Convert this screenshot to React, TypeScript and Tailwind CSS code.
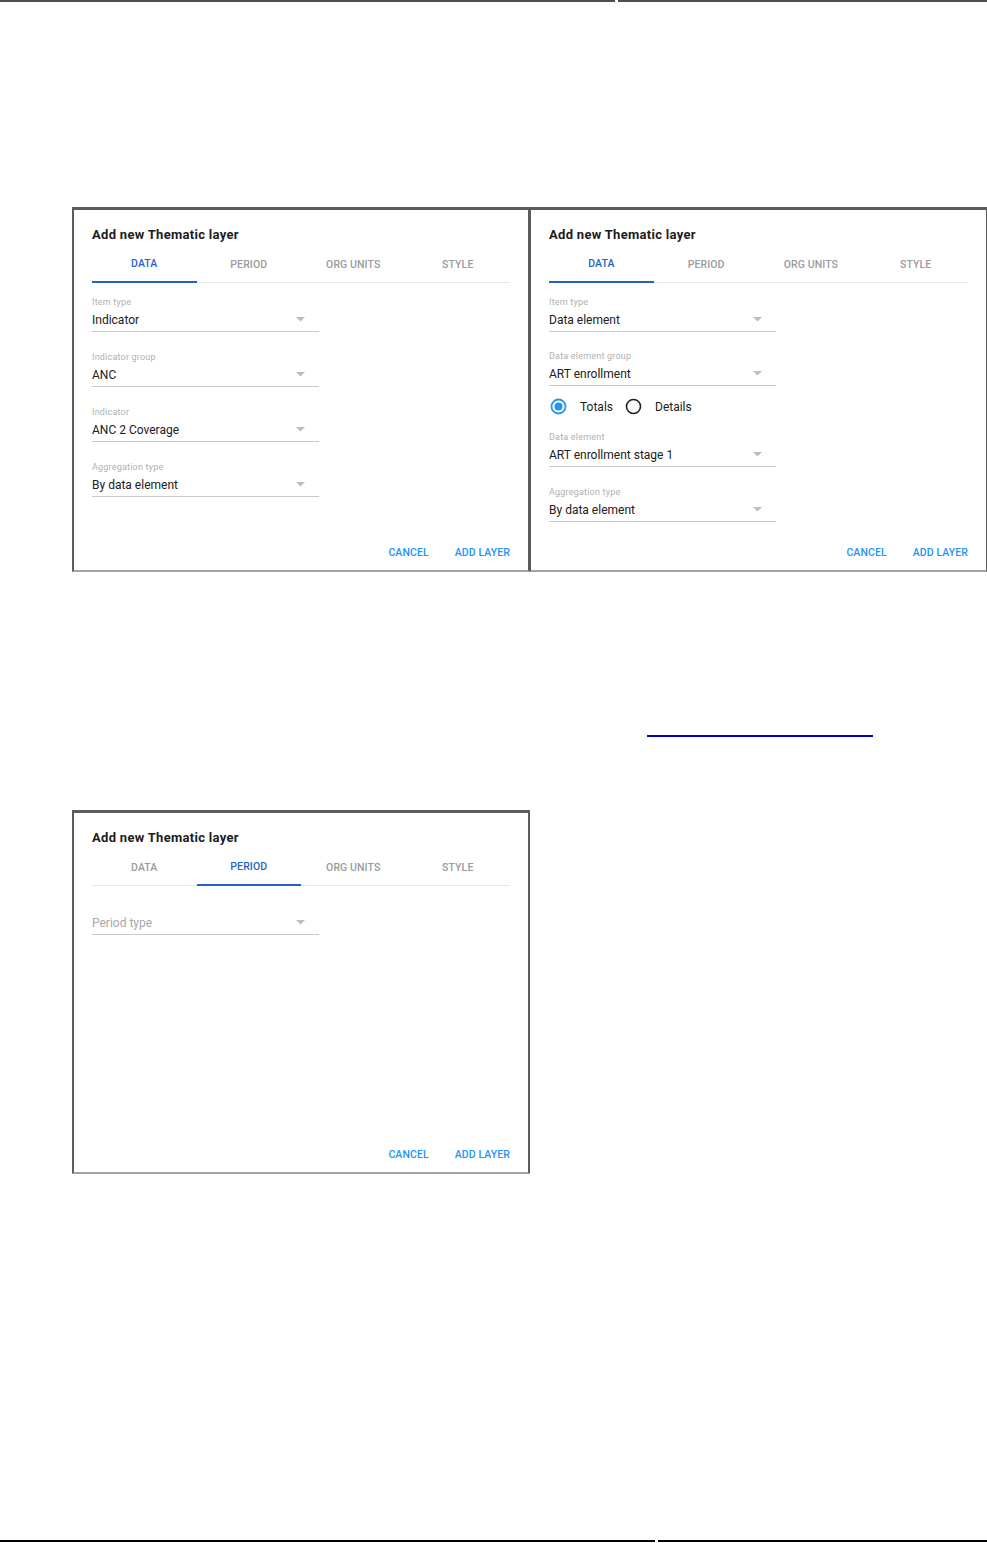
import React from 'react';

const TABS = ['Data', 'Period', 'Org units', 'Style'];

const Arrow = () => (
  <svg width="9" height="5" viewBox="0 0 9 5" className="mr-[14px] mt-[5px] shrink-0">
    <polygon points="0,0 9,0 4.5,4.5" fill="#bdbdbd" />
  </svg>
);

const Field: React.FC<{ label?: string; value: string; muted?: boolean }> = ({ label, value, muted }) => (
  <div className="w-[227px]">
    <div className="h-[12px] text-[9px] leading-[12px] tracking-[0.2px] text-[#b0b0b0]">{label}</div>
    <div className="mt-[4px] flex h-[20px] items-start justify-between border-b border-[#c9c9c9]">
      <span className={`text-[12px] leading-[16px] ${muted ? 'text-[#a8a8a8]' : 'text-[#202020]'}`}>{value}</span>
      <Arrow />
    </div>
  </div>
);

const Radio: React.FC<{ checked?: boolean; label: string }> = ({ checked, label }) => (
  <div className="flex items-center gap-[13px]">
    <svg width="17" height="17" viewBox="0 0 17 17">
      {checked ? (
        <>
          <circle cx="8.5" cy="8.5" r="7" fill="none" stroke="#2196f3" strokeWidth="1.8" />
          <circle cx="8.5" cy="8.5" r="4" fill="#2196f3" />
        </>
      ) : (
        <circle cx="8.5" cy="8.5" r="7" fill="none" stroke="#212121" strokeWidth="1.6" />
      )}
    </svg>
    <span className="text-[12px] leading-[16px] text-[#202020]">{label}</span>
  </div>
);

const Dialog: React.FC<{ active: number; className?: string; children: React.ReactNode }> = ({ active, className, children }) => (
  <div
    className={`flex flex-col border-t-[3px] border-b-2 border-t-[#5c5c5c] border-b-[#a3a3a3] bg-white px-[18px] ${className ?? ''}`}
  >
    <h2 className="pt-[17px] text-[13px] font-bold leading-[16px] tracking-[0.3px] text-[#1c1c1c]">Add new Thematic layer</h2>
    <div className="mt-[4px] flex border-b border-[#e8e8e8]">
      {TABS.map((t, i) => (
        <div
          key={t}
          className={`-mb-px flex h-[36px] flex-1 items-center justify-center text-[10.5px] font-medium uppercase tracking-[0.1px] ${
            i === active ? 'border-b-2 border-[#1f64c6] text-[#1f64c6]' : 'text-[#9b9b9b]'
          }`}
        >
          {t}
        </div>
      ))}
    </div>
    {children}
    <div className="mt-auto flex justify-end gap-[26px] pb-[9px] text-[10.5px] font-medium uppercase leading-[16px] tracking-[0.1px] text-[#2196f3]">
      <span>Cancel</span>
      <span>Add layer</span>
    </div>
  </div>
);

export default function App() {
  return (
    <div className="flex h-[1543px] w-[987px] flex-col bg-white" style={{ fontFamily: 'Roboto, "Liberation Sans", sans-serif' }}>
      <div className="flex h-[2px] gap-[3px]">
        <div className="w-[615px] bg-[#4d4d4d]" />
        <div className="flex-1 bg-[#4d4d4d]" />
      </div>

      <div className="mt-[205px] flex pl-[72px]">
        <Dialog active={0} className="h-[365px] w-[458px] border-x-2 border-x-[#5c5c5c]">
          <div className="mt-[13px] flex flex-col gap-[19px]">
            <Field label="Item type" value="Indicator" />
            <Field label="Indicator group" value="ANC" />
            <Field label="Indicator" value="ANC 2 Coverage" />
            <Field label="Aggregation type" value="By data element" />
          </div>
        </Dialog>
        <Dialog active={0} className="h-[365px] w-[457px] border-x-[1px] border-x-[#5c5c5c]">
          <div className="mt-[13px] flex flex-col">
            <Field label="Item type" value="Data element" />
            <div className="mt-[18px]">
              <Field label="Data element group" value="ART enrollment" />
            </div>
            <div className="mt-[12px] flex h-[17px] items-center gap-[12px] pl-[1px]">
              <Radio checked label="Totals" />
              <Radio label="Details" />
            </div>
            <div className="mt-[16px]">
              <Field label="Data element" value="ART enrollment stage 1" />
            </div>
            <div className="mt-[19px]">
              <Field label="Aggregation type" value="By data element" />
            </div>
          </div>
        </Dialog>
      </div>

      <div className="ml-[647px] mt-[163px] h-[1.5px] w-[226px] bg-[#0000cc]" />

      <div className="mt-[73px] flex pl-[72px]">
        <Dialog active={1} className="h-[364px] w-[458px] border-x-2 border-x-[#5c5c5c]">
          <div className="mt-[13px]">
            <Field value="Period type" muted />
          </div>
        </Dialog>
      </div>

      <div className="mt-auto mb-[1px] flex h-[2px] gap-[3px]">
        <div className="w-[655px] bg-black" />
        <div className="flex-1 bg-black" />
      </div>
    </div>
  );
}
